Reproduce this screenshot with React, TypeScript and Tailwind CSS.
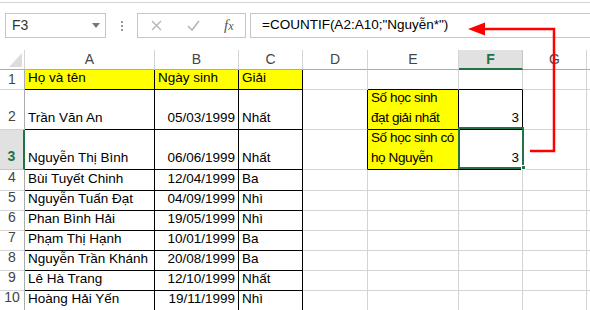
import React from 'react';

const font = { fontFamily: '"Liberation Sans", "Noto Sans", sans-serif' };

type CellProps = {
  text?: string;
  lines?: string[];
  align?: 'left' | 'right';
  yellow?: boolean;
  rightBlack?: boolean;
  bottomBlack?: boolean;
};

function Cell({ text, lines, align = 'left', yellow, rightBlack, bottomBlack }: CellProps) {
  return (
    <div
      className={`flex items-end border-r border-b px-[3px] text-[13.5px] leading-[20px] text-black overflow-hidden whitespace-nowrap ${
        align === 'right' ? 'justify-end' : 'justify-start'
      } ${yellow ? 'bg-[#ffff00]' : 'bg-white'} ${rightBlack ? 'border-r-black' : 'border-r-[#d4d4d4]'} ${
        bottomBlack ? 'border-b-black' : 'border-b-[#d4d4d4]'
      }`}
    >
      {lines ? (
        <div className="flex flex-col pb-[1px] tracking-[-0.4px]">
          {lines.map((l) => (
            <span key={l}>{l}</span>
          ))}
        </div>
      ) : (
        <span className="pb-[1px]">{text}</span>
      )}
    </div>
  );
}

const students = [
  ['Trần Văn An', '05/03/1999', 'Nhất'],
  ['Nguyễn Thị Bình', '06/06/1999', 'Nhất'],
  ['Bùi Tuyết Chinh', '12/04/1999', 'Ba'],
  ['Nguyễn Tuấn Đạt', '04/09/1999', 'Nhì'],
  ['Phan Bình Hải', '19/05/1999', 'Nhì'],
  ['Phạm Thị Hạnh', '10/01/1999', 'Ba'],
  ['Nguyễn Trần Khánh', '20/08/1999', 'Ba'],
  ['Lê Hà Trang', '12/10/1999', 'Nhất'],
  ['Hoàng Hải Yến', '19/11/1999', 'Nhì'],
];

const columns = ['A', 'B', 'C', 'D', 'E', 'F', 'G', ''];

export default function App() {
  return (
    <div className="relative w-[590px] h-[310px] overflow-hidden bg-white" style={font}>
      {/* Formula bar */}
      <div className="h-[48px] border-t border-[#d4d4d4] mt-[2px] flex items-start pt-[10px] pl-[5px]">
        <div className="w-[101px] h-[25px] border border-[#c6c6c6] flex items-center justify-between pl-[6px] pr-[5px] text-[14px] text-[#333]">
          <span>F3</span>
          <svg width="8" height="5" viewBox="0 0 8 5">
            <path d="M0 0 H8 L4 5 Z" fill="#777" />
          </svg>
        </div>
        <div className="w-[31px] h-[25px] flex flex-col items-center justify-center gap-[2px]">
          <span className="w-[2px] h-[2px] bg-[#999]" />
          <span className="w-[2px] h-[2px] bg-[#999]" />
          <span className="w-[2px] h-[2px] bg-[#999]" />
        </div>
        <div className="w-[109px] h-[25px] border border-[#c6c6c6] flex items-center">
          <svg className="ml-[13px]" width="11" height="11" viewBox="0 0 11 11">
            <path d="M1 1 L10 10 M10 1 L1 10" stroke="#b5b5b5" strokeWidth="1.4" />
          </svg>
          <svg className="ml-[25px]" width="13" height="11" viewBox="0 0 13 11">
            <path d="M1 6 L5 10 L12 1" stroke="#b5b5b5" strokeWidth="1.6" fill="none" />
          </svg>
          <span
            className="ml-[24px] text-[15px] italic text-[#555]"
            style={{ fontFamily: '"Liberation Serif", serif' }}
          >
            f<span className="text-[12px]">x</span>
          </span>
        </div>
        <div className="flex-1 ml-[4px] h-[25px] border border-r-0 border-[#c6c6c6] flex items-center pl-[11px] text-[13.5px] text-black whitespace-nowrap">
          =COUNTIF(A2:A10;"Nguyễn*")
        </div>
      </div>

      {/* Sheet */}
      <div className="grid grid-cols-[25px_130px_84px_64px_65px_91px_64px_64px_1fr] grid-rows-[20px_20px_40px_40px_21px_20px_20px_20px_20px_20px_20px]">
        {/* Column headers */}
        <div className="relative border-r border-b border-r-[#d4d4d4] border-b-[#ababab] bg-white">
          <svg className="absolute left-[9px] top-[3px]" width="13" height="14" viewBox="0 0 13 14">
            <path d="M13 0 V14 H0 Z" fill="#dcdcdc" />
          </svg>
        </div>
        {columns.map((c) =>
          c === 'F' ? (
            <div
              key={c}
              className="flex items-center justify-center bg-[#e1e1e1] border-r border-r-[#c6c6c6] border-b-2 border-b-[#217346] text-[14px] font-bold text-[#217346]"
            >
              {c}
            </div>
          ) : (
            <div
              key={c || 'x'}
              className="flex items-center justify-center bg-white border-r border-b border-r-[#d4d4d4] border-b-[#ababab] text-[14px] text-[#444]"
            >
              {c}
            </div>
          )
        )}

        {/* Row 1 */}
        <div className="flex items-center justify-center border-r border-b border-r-[#ababab] border-b-[#d4d4d4] text-[14px] text-[#444]">
          1
        </div>
        <Cell text="Họ và tên" yellow rightBlack bottomBlack />
        <Cell text="Ngày sinh" yellow rightBlack bottomBlack />
        <Cell text="Giải" yellow rightBlack bottomBlack />
        <Cell />
        <Cell bottomBlack />
        <Cell bottomBlack />
        <Cell />
        <Cell />

        {/* Rows 2-10 */}
        {students.map((s, i) => {
          const row = i + 2;
          return (
            <React.Fragment key={row}>
              {row === 3 ? (
                <div className="flex items-end justify-center pb-[2px] bg-[#e1e1e1] border-r-2 border-b border-r-[#217346] border-b-[#c6c6c6] text-[14px] font-bold text-[#217346]">
                  {row}
                </div>
              ) : (
                <div className="flex items-end justify-center pb-[2px] border-r border-b border-r-[#ababab] border-b-[#d4d4d4] text-[14px] text-[#444]">
                  {row}
                </div>
              )}
              <Cell text={s[0]} rightBlack bottomBlack />
              <Cell text={s[1]} align="right" rightBlack bottomBlack />
              <Cell text={s[2]} rightBlack bottomBlack />
              <Cell rightBlack={row === 2 || row === 3} />
              {row === 2 && <Cell lines={['Số học sinh', 'đạt giải nhất']} yellow rightBlack bottomBlack />}
              {row === 3 && <Cell lines={['Số học sinh có', 'họ Nguyễn']} yellow rightBlack bottomBlack />}
              {row > 3 && <Cell />}
              {row === 2 || row === 3 ? <Cell text="3" align="right" rightBlack bottomBlack /> : <Cell />}
              <Cell />
              <Cell />
            </React.Fragment>
          );
        })}
      </div>

      {/* Selection of F3 */}
      <div className="absolute left-[458px] top-[127px] w-[66px] h-[42px] border-2 border-[#217346] pointer-events-none" />
      <div className="absolute left-[521px] top-[165px] w-[5px] h-[5px] bg-[#217346] border border-white" />

      {/* Red arrow */}
      <svg className="absolute left-0 top-0 pointer-events-none" width="590" height="310" viewBox="0 0 590 310">
        <path d="M530 151 H554 V29 H482" stroke="#ff0000" strokeWidth="2.5" fill="none" />
        <path d="M468 29 L485 22.5 L485 35.5 Z" fill="#ff0000" />
      </svg>
    </div>
  );
}
